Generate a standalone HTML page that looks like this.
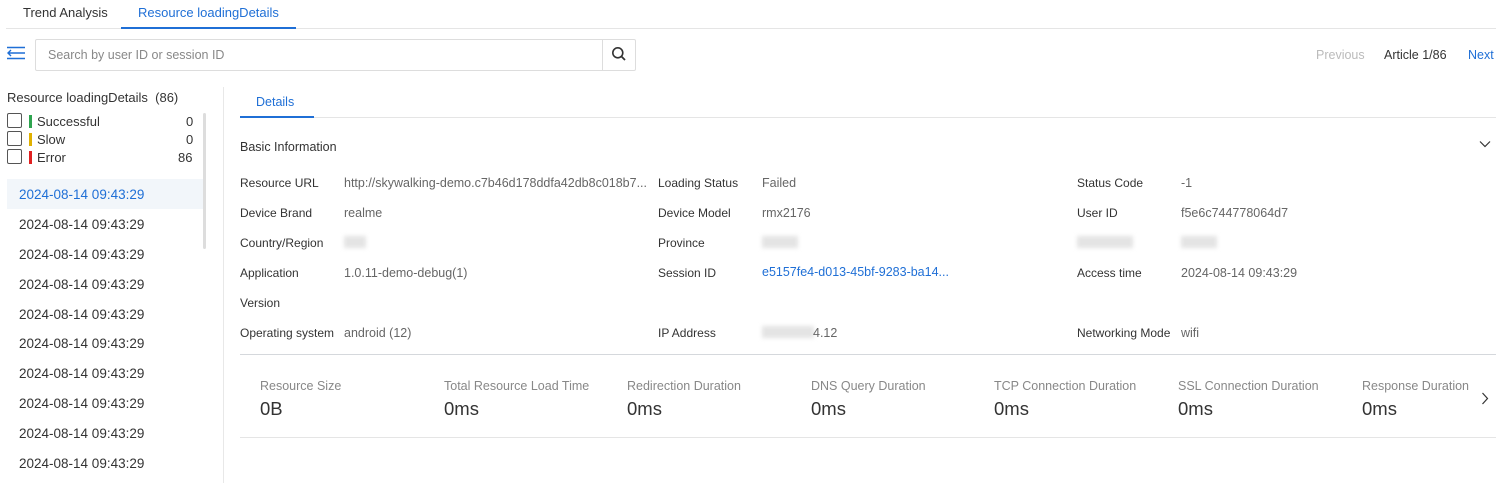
<!DOCTYPE html>
<html><head><meta charset="utf-8"><style>
*{box-sizing:border-box;margin:0;padding:0}
body{width:1507px;height:483px;overflow:hidden;background:#fff;font-family:"Liberation Sans",Arial,sans-serif;font-size:12px;color:#333;position:relative}
.a{position:absolute;white-space:nowrap;line-height:16px}
.lab{color:#333}
.val{color:#666;font-size:12.5px}
.blur{position:absolute;background:#e4e4e4;filter:blur(2px);height:12px}
.date{position:absolute;left:19px;color:#333;font-size:13.5px;line-height:17px}
.ml{position:absolute;color:#888;font-size:12.5px;top:378px}
.mv{position:absolute;color:#333;font-size:18.5px;top:400px;line-height:18px}
.cb{position:absolute;left:7px;width:15px;height:15px;border:1px solid #555;border-radius:2px;background:#fff}
.bar{position:absolute;left:29px;width:3px;height:13px}
.s13{font-size:13px}
</style></head><body>
<div class="a" style="left:23px;top:5px;font-size:13px;color:#333">Trend Analysis</div>
<div class="a" style="left:138px;top:5px;font-size:13px;color:#1f6fd6">Resource loadingDetails</div>
<div style="position:absolute;left:6px;top:28px;width:1490px;height:1px;background:#e5e5e5"></div>
<div style="position:absolute;left:121px;top:27px;width:175px;height:2px;background:#1f6fd6"></div>

<svg style="position:absolute;left:6px;top:46px" width="20" height="14" viewBox="0 0 20 14"><path d="M1 1.5H19M1 12.5H19M2 7H19M5 4L2 7L5 10" stroke="#1f6fd6" stroke-width="1.4" fill="none"/></svg>
<div style="position:absolute;left:35px;top:39px;width:601px;height:32px;border:1px solid #ddd;border-radius:2px"></div>
<div style="position:absolute;left:602px;top:40px;width:1px;height:30px;background:#ddd"></div>
<div class="a" style="left:48px;top:47px;font-size:12.5px;color:#888">Search by user ID or session ID</div>
<svg style="position:absolute;left:611px;top:46px" width="16" height="16" viewBox="0 0 16 16"><circle cx="6.8" cy="6.8" r="5" stroke="#333" stroke-width="1.6" fill="none"/><path d="M10.5 10.5L14 14" stroke="#333" stroke-width="1.8"/></svg>
<div class="a" style="left:1316px;top:47px;color:#bbb;font-size:12.5px">Previous</div>
<div class="a" style="left:1384px;top:47px;color:#333;font-size:12.5px">Article 1/86</div>
<div class="a" style="left:1468px;top:47px;color:#1f6fd6;font-size:12.5px">Next</div>

<div class="a s13" style="left:7px;top:90px;color:#333">Resource loadingDetails&nbsp;&nbsp;(86)</div>
<div class="cb" style="top:113px"></div><div class="bar" style="top:115px;background:#2ea44f"></div><div class="a s13" style="left:37px;top:114px">Successful</div><div class="a s13" style="left:186px;top:114px">0</div>
<div class="cb" style="top:131px"></div><div class="bar" style="top:133px;background:#e0b000"></div><div class="a s13" style="left:37px;top:132px">Slow</div><div class="a s13" style="left:186px;top:132px">0</div>
<div class="cb" style="top:149px"></div><div class="bar" style="top:151px;background:#e02020"></div><div class="a s13" style="left:37px;top:150px">Error</div><div class="a s13" style="left:178px;top:150px">86</div>
<div style="position:absolute;left:203px;top:113px;width:3px;height:136px;background:#ddd;border-radius:2px"></div>
<div style="position:absolute;left:7px;top:179px;width:196px;height:30px;background:#f2f6fa"></div>
<div class="a date" style="top:186px;color:#1f6fd6">2024-08-14 09:43:29</div>
<div class="a date" style="top:216px">2024-08-14 09:43:29</div>
<div class="a date" style="top:246px">2024-08-14 09:43:29</div>
<div class="a date" style="top:276px">2024-08-14 09:43:29</div>
<div class="a date" style="top:306px">2024-08-14 09:43:29</div>
<div class="a date" style="top:335px">2024-08-14 09:43:29</div>
<div class="a date" style="top:365px">2024-08-14 09:43:29</div>
<div class="a date" style="top:395px">2024-08-14 09:43:29</div>
<div class="a date" style="top:425px">2024-08-14 09:43:29</div>
<div class="a date" style="top:455px">2024-08-14 09:43:29</div>
<div style="position:absolute;left:223px;top:87px;width:1px;height:396px;background:#e8e8e8"></div>

<div class="a" style="left:256px;top:94px;color:#1f6fd6;font-size:12.5px">Details</div>
<div style="position:absolute;left:240px;top:117px;width:1256px;height:1px;background:#e5e5e5"></div>
<div style="position:absolute;left:240px;top:116px;width:74px;height:2px;background:#1f6fd6"></div>
<div class="a" style="left:240px;top:139px;color:#333;font-size:12.5px">Basic Information</div>
<svg style="position:absolute;left:1479px;top:140px" width="12" height="8" viewBox="0 0 12 8"><path d="M1 1.5L6 6.5L11 1.5" stroke="#333" stroke-width="1.2" fill="none"/></svg>

<div class="a lab" style="left:240px;top:175px">Resource URL</div><div class="a val" style="left:344px;top:175px">http://skywalking-demo.c7b46d178ddfa42db8c018b7...</div>
<div class="a lab" style="left:658px;top:175px">Loading Status</div><div class="a val" style="left:762px;top:175px">Failed</div>
<div class="a lab" style="left:1077px;top:175px">Status Code</div><div class="a val" style="left:1181px;top:175px">-1</div>
<div class="a lab" style="left:240px;top:205px">Device Brand</div><div class="a val" style="left:344px;top:205px">realme</div>
<div class="a lab" style="left:658px;top:205px">Device Model</div><div class="a val" style="left:762px;top:205px">rmx2176</div>
<div class="a lab" style="left:1077px;top:205px">User ID</div><div class="a val" style="left:1181px;top:205px">f5e6c744778064d7</div>
<div class="a lab" style="left:240px;top:235px">Country/Region</div><div class="blur" style="left:344px;top:236px;width:22px"></div>
<div class="a lab" style="left:658px;top:235px">Province</div><div class="blur" style="left:762px;top:236px;width:36px"></div>
<div class="blur" style="left:1077px;top:236px;width:56px"></div><div class="blur" style="left:1181px;top:236px;width:36px"></div>
<div class="a lab" style="left:240px;top:265px">Application</div><div class="a val" style="left:344px;top:265px">1.0.11-demo-debug(1)</div>
<div class="a lab" style="left:658px;top:265px">Session ID</div><div class="a" style="left:762px;top:264px;color:#1f6fd6;font-size:12.5px">e5157fe4-d013-45bf-9283-ba14...</div>
<div class="a lab" style="left:1077px;top:265px">Access time</div><div class="a val" style="left:1181px;top:265px">2024-08-14 09:43:29</div>
<div class="a lab" style="left:240px;top:295px">Version</div>
<div class="a lab" style="left:240px;top:325px">Operating system</div><div class="a val" style="left:344px;top:325px">android (12)</div>
<div class="a lab" style="left:658px;top:325px">IP Address</div><div class="blur" style="left:762px;top:326px;width:52px"></div><div class="a val" style="left:813px;top:325px">4.12</div>
<div class="a lab" style="left:1077px;top:325px">Networking Mode</div><div class="a val" style="left:1181px;top:325px">wifi</div>
<div style="position:absolute;left:240px;top:354px;width:1256px;height:1px;background:#d5d8dc"></div>

<div class="a ml" style="left:260px">Resource Size</div><div class="a mv" style="left:260px">0B</div>
<div class="a ml" style="left:444px">Total Resource Load Time</div><div class="a mv" style="left:444px">0ms</div>
<div class="a ml" style="left:627px">Redirection Duration</div><div class="a mv" style="left:627px">0ms</div>
<div class="a ml" style="left:811px">DNS Query Duration</div><div class="a mv" style="left:811px">0ms</div>
<div class="a ml" style="left:994px">TCP Connection Duration</div><div class="a mv" style="left:994px">0ms</div>
<div class="a ml" style="left:1178px">SSL Connection Duration</div><div class="a mv" style="left:1178px">0ms</div>
<div class="a ml" style="left:1362px">Response Duration</div><div class="a mv" style="left:1362px">0ms</div>
<svg style="position:absolute;left:1481px;top:392px" width="8" height="13" viewBox="0 0 8 13"><path d="M1.5 1L6.5 6.5L1.5 12" stroke="#333" stroke-width="1.2" fill="none"/></svg>
<div style="position:absolute;left:240px;top:437px;width:1256px;height:1px;background:#e5e5e5"></div>
</body></html>
